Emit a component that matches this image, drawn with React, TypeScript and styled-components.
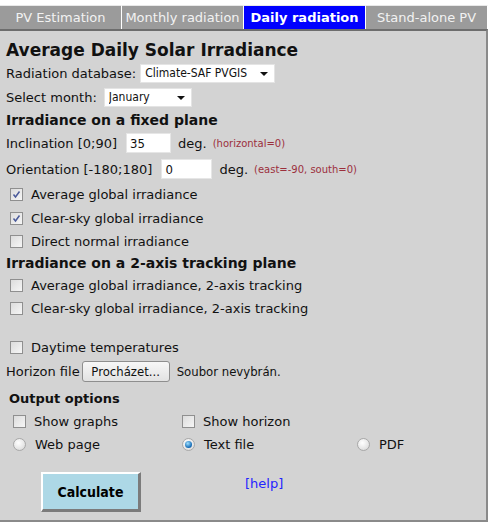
import React from "react";
import styled, { createGlobalStyle } from "styled-components";

const Global = createGlobalStyle`
  html, body { margin: 0; padding: 0; background: #ffffff; }
  body { font-family: "DejaVu Sans", Verdana, sans-serif; font-size: 13px; color: #111; }
`;

const Page = styled.div`
  padding-top: 5px;
  width: 488px;
`;

const Tabs = styled.div`
  display: flex;
  height: 24px;
  background: #ffffff;
`;

const Tab = styled.div<{ $active?: boolean }>`
  flex: 1;
  display: flex;
  align-items: center;
  justify-content: center;
  background: ${(p) => (p.$active ? "#0000ff" : "#9b9b9b")};
  color: ${(p) => (p.$active ? "#ffffff" : "#f2f2f2")};
  font-weight: ${(p) => (p.$active ? "bold" : "normal")};
  font-size: 13px;
  border-right: 1px solid #ffffff;
  border-top: 1px solid #e8e8e8;
`;

const Panel = styled.div`
  background: #d3d3d3;
  border-top: 2px solid #6d6d6d;
  border-right: 2px solid #8a8a8a;
  border-bottom: 2px solid #8a8a8a;
  padding: 7px 0 8px 6px;
  height: 493px;
  box-sizing: border-box;
`;

const Title = styled.div`
  font-size: 17px;
  font-weight: bold;
  height: 23px;
  display: flex;
  align-items: center;
`;

const Heading = styled.div<{ $h?: number }>`
  font-size: 14px;
  font-weight: bold;
  height: ${(p) => p.$h ?? 21}px;
  display: flex;
  align-items: center;
`;

const Row = styled.div<{ $h?: number; $indent?: number }>`
  display: flex;
  align-items: center;
  height: ${(p) => p.$h ?? 23}px;
  padding-left: ${(p) => p.$indent ?? 0}px;
  white-space: nowrap;
`;

const SelectWrap = styled.div<{ $w: number; $ml: number }>`
  position: relative;
  width: ${(p) => p.$w}px;
  height: 19px;
  margin-left: ${(p) => p.$ml}px;
`;

const Select = styled.select`
  appearance: none;
  -webkit-appearance: none;
  width: 100%;
  height: 100%;
  border: 1px solid #e4e4e4;
  background: #ffffff;
  font-family: "DejaVu Sans Condensed", Tahoma, sans-serif;
  font-size: 12px;
  color: #111;
  padding: 0 0 0 4px;
  margin: 0;
  outline: none;
`;

const Arrow = styled.svg`
  position: absolute;
  right: 7px;
  top: 8px;
  pointer-events: none;
`;

const TextInput = styled.input<{ $w: number }>`
  width: ${(p) => p.$w}px;
  height: 20px;
  box-sizing: border-box;
  border: 1px solid #e6e6e6;
  background: #ffffff;
  font-family: "DejaVu Sans Condensed", Tahoma, sans-serif;
  font-size: 13px;
  padding: 0 3px;
  margin: 0 0 0 9px;
  color: #111;
  outline: none;
`;

const Unit = styled.span`
  margin-left: 7px;
`;

const Note = styled.span`
  margin-left: 6px;
  font-size: 10px;
  color: #9c2f3c;
`;

const Box = styled.span`
  display: inline-flex;
  align-items: center;
  justify-content: center;
  width: 11px;
  height: 11px;
  border: 1px solid #8f8f8f;
  background: linear-gradient(135deg, #dcdcdc 0%, #f6f6f6 100%);
  margin-right: 8px;
  flex: none;
`;

const RadioDot = styled.span<{ $on?: boolean }>`
  display: inline-flex;
  align-items: center;
  justify-content: center;
  width: 11px;
  height: 11px;
  border-radius: 50%;
  border: 1px solid #a8a8a8;
  background: radial-gradient(circle at 40% 35%, #ffffff 0%, #e6e6e6 60%, #cfcfcf 100%);
  margin-right: 9px;
  flex: none;
  &::after {
    content: "";
    display: ${(p) => (p.$on ? "block" : "none")};
    width: 7px;
    height: 7px;
    border-radius: 50%;
    background: radial-gradient(circle at 40% 35%, #9fe0ff 0%, #1a6fb8 65%, #0d3f7a 100%);
  }
`;

const Check = ({ on }: { on?: boolean }) => (
  <Box>
    {on && (
      <svg width="9" height="9" viewBox="0 0 9 9">
        <path d="M1.5 4.5 L3.5 7 L7.5 1.5" stroke="#4a5a9a" strokeWidth="1.5" fill="none" />
      </svg>
    )}
  </Box>
);

const FileButton = styled.button`
  height: 21px;
  width: 88px;
  margin-left: 2px;
  border: 1px solid #8e8e8e;
  border-radius: 3px;
  background: linear-gradient(#f7f7f7, #e2e2e2);
  font-family: "DejaVu Sans Condensed", Tahoma, sans-serif;
  font-size: 13px;
  color: #111;
  padding: 0;
`;

const FileStatus = styled.span`
  margin-left: 7px;
  font-family: "DejaVu Sans Condensed", Tahoma, sans-serif;
  font-size: 13px;
`;

const OptionsHeading = styled.div`
  font-size: 13px;
  font-weight: bold;
  height: 24px;
  display: flex;
  align-items: center;
  padding-left: 3px;
  margin-top: 3px;
`;

const OptGrid = styled.div`
  display: grid;
  grid-template-columns: 169px 175px auto;
  padding-left: 7px;
`;

const OptCell = styled.div`
  display: flex;
  align-items: center;
  height: 23px;
  white-space: nowrap;
`;

const BottomBar = styled.div`
  display: flex;
  align-items: flex-start;
  padding-left: 35px;
  margin-top: 16px;
`;

const CalcButton = styled.button`
  width: 100px;
  height: 40px;
  background: #add8e6;
  border-style: solid;
  border-width: 2px 3px 3px 2px;
  border-color: #ffffff #7b7b7b #7b7b7b #ffffff;
  font-family: "DejaVu Sans Condensed", Tahoma, sans-serif;
  font-weight: bold;
  font-size: 14px;
  color: #000;
  padding: 0;
`;

const Help = styled.a`
  margin-left: 104px;
  margin-top: 4px;
  color: #2424ff;
  text-decoration: none;
  font-size: 13px;
`;

const Gap = styled.div<{ $h: number }>`
  height: ${(p) => p.$h}px;
`;

const DropArrow = () => (
  <Arrow width="8" height="4" viewBox="0 0 8 4">
    <path d="M0 0 H8 L4 4 Z" fill="#111" />
  </Arrow>
);

export default function App() {
  return (
    <>
      <Global />
      <Page>
        <Tabs>
          <Tab>PV Estimation</Tab>
          <Tab>Monthly radiation</Tab>
          <Tab $active>Daily radiation</Tab>
          <Tab>Stand-alone PV</Tab>
        </Tabs>
        <Panel>
          <Title>Average Daily Solar Irradiance</Title>
          <Row $h={24}>
            Radiation database:
            <SelectWrap $w={135} $ml={4}>
              <Select defaultValue="c">
                <option value="c">Climate-SAF PVGIS</option>
              </Select>
              <DropArrow />
            </SelectWrap>
          </Row>
          <Row $h={24}>
            Select month:
            <SelectWrap $w={88} $ml={7}>
              <Select defaultValue="jan">
                <option value="jan">January</option>
              </Select>
              <DropArrow />
            </SelectWrap>
          </Row>
          <Heading $h={21}>Irradiance on a fixed plane</Heading>
          <Row $h={26}>
            Inclination [0;90]
            <TextInput $w={45} defaultValue="35" />
            <Unit>deg.</Unit>
            <Note>(horizontal=0)</Note>
          </Row>
          <Row $h={26}>
            Orientation [-180;180]
            <TextInput $w={51} defaultValue="0" />
            <Unit>deg.</Unit>
            <Note>(east=-90, south=0)</Note>
          </Row>
          <Row $h={25} $indent={4}>
            <Check on />
            Average global irradiance
          </Row>
          <Row $indent={4}>
            <Check on />
            Clear-sky global irradiance
          </Row>
          <Row $indent={4}>
            <Check />
            Direct normal irradiance
          </Row>
          <Heading $h={20}>Irradiance on a 2-axis tracking plane</Heading>
          <Row $h={24} $indent={4}>
            <Check />
            Average global irradiance, 2-axis tracking
          </Row>
          <Row $indent={4}>
            <Check />
            Clear-sky global irradiance, 2-axis tracking
          </Row>
          <Gap $h={16} />
          <Row $indent={4}>
            <Check />
            Daytime temperatures
          </Row>
          <Row $h={24}>
            Horizon file
            <FileButton>Procházet...</FileButton>
            <FileStatus>Soubor nevybrán.</FileStatus>
          </Row>
          <OptionsHeading>Output options</OptionsHeading>
          <OptGrid>
            <OptCell>
              <Check />
              Show graphs
            </OptCell>
            <OptCell>
              <Check />
              Show horizon
            </OptCell>
            <OptCell />
            <OptCell>
              <RadioDot />
              Web page
            </OptCell>
            <OptCell>
              <RadioDot $on />
              Text file
            </OptCell>
            <OptCell>
              <RadioDot />
              PDF
            </OptCell>
          </OptGrid>
          <BottomBar>
            <CalcButton>Calculate</CalcButton>
            <Help href="#">[help]</Help>
          </BottomBar>
        </Panel>
      </Page>
    </>
  );
}
